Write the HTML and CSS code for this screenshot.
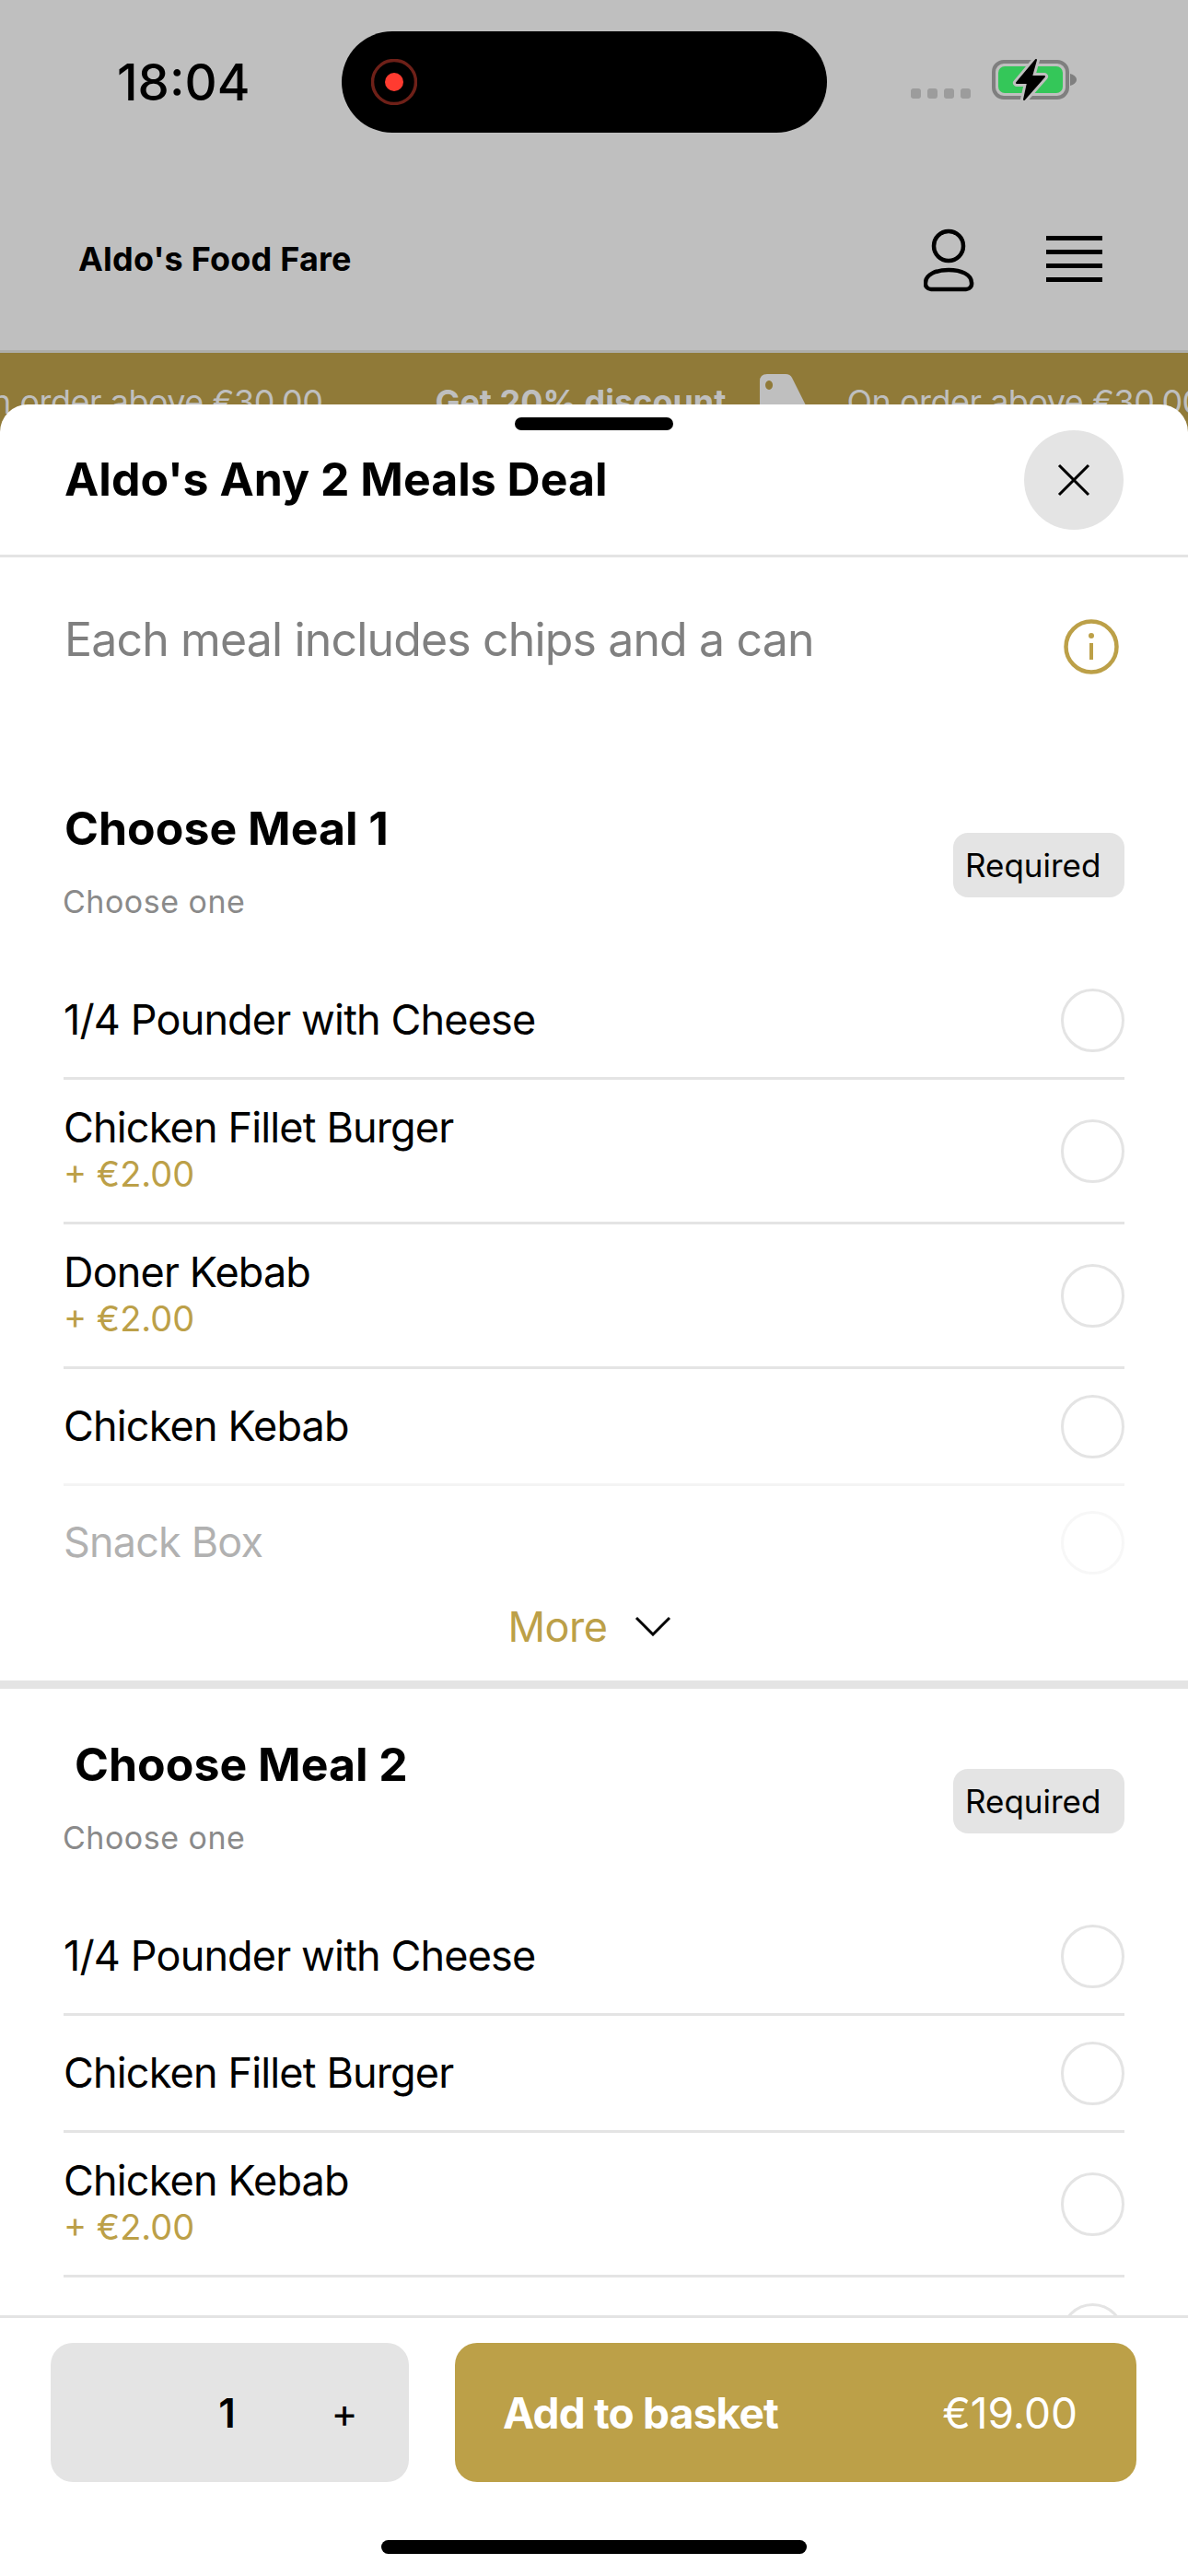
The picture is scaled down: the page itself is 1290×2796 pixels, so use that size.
FILE: index.html
```html
<!DOCTYPE html>
<html lang="en">
<head>
  <meta charset="UTF-8">
  <meta name="viewport" content="width=device-width, initial-scale=1.0">
  <title>Aldo's Food Fare</title>
  <link rel="stylesheet" href="styles.css">
</head>
<body>
  <div class="screen">
    <div class="backdrop">
      <div class="status-bar">
        <span class="status-time">18:04</span>
        <div class="island">
          <svg class="record-dot" width="50" height="50" viewBox="0 0 50 50">
            <circle cx="25" cy="25" r="23.5" fill="none" stroke="#6e2018" stroke-width="3.5"/>
            <circle cx="25" cy="25" r="10" fill="#ff3b30"/>
          </svg>
        </div>
        <svg class="status-icons" width="181" height="52" viewBox="0 0 181 52">
          <rect x="0" y="36" width="11" height="11" rx="3" fill="#9c9c9c"/>
          <rect x="18" y="36" width="11" height="11" rx="3" fill="#9c9c9c"/>
          <rect x="36" y="36" width="11" height="11" rx="3" fill="#9c9c9c"/>
          <rect x="54" y="36" width="11" height="11" rx="3" fill="#9c9c9c"/>
          <rect x="90" y="7" width="80" height="39" rx="11" fill="none" stroke="#7f7f7f" stroke-width="4"/>
          <rect x="95" y="12" width="70" height="29" rx="7" fill="#34c759"/>
          <path d="M173 20c4 1 7 3.500 7 6.500s-3 5.500-7 6.500z" fill="#7f7f7f"/>
          <path d="M136 5 115 30h12l-4 18 22-25h-14z" fill="#000" stroke="#bfbfbf" stroke-width="8" stroke-linejoin="round"/>
          <path d="M136 5 115 30h12l-4 18 22-25h-14z" fill="#000" stroke="#000" stroke-width="2" stroke-linejoin="round"/>
        </svg>
      </div>

      <header class="app-header">
        <span class="app-name">Aldo's Food Fare</span>
        <svg class="person-icon" width="55" height="70" viewBox="0 0 55 70">
          <circle cx="27" cy="20" r="16" fill="none" stroke="#000" stroke-width="4.500"/>
          <path d="M8 67h38a6 6 0 0 0 6-7c0-9-11-14-25-14S2 51 2 60a6 6 0 0 0 6 7z" fill="none" stroke="#000" stroke-width="4.500"/>
        </svg>
        <div class="menu-icon">
          <span></span><span></span><span></span><span></span>
        </div>
      </header>

      <div class="promo">
        <span class="promo-text promo-first">On order above €30.00</span>
        <strong class="promo-bold">Get 20% discount</strong>
        <svg class="tag-icon" width="60" height="60" viewBox="0 0 60 60">
          <path fill-rule="evenodd" d="M8 0h20q5 0 7 4l25 50v6H0V8q0-8 8-8zM10 7a4 5 0 1 0 .1 0z" fill="#bfbfbf"/>
        </svg>
        <span class="promo-text">On order above €30.00</span>
      </div>
    </div>

    <div class="sheet">
      <div class="sheet-handle"></div>
      <div class="sheet-header">
        <h1>Aldo's Any 2 Meals Deal</h1>
        <button class="close-button">
          <svg width="36" height="36" viewBox="0 0 36 36">
            <path d="M2 2l32 32M34 2 2 34" stroke="#000" stroke-width="3" fill="none"/>
          </svg>
        </button>
      </div>

      <div class="sheet-body">
        <div class="deal-info">
          <p>Each meal includes chips and a can</p>
          <svg class="info-icon" width="60" height="60" viewBox="0 0 60 60">
            <circle cx="30" cy="30" r="27.500" fill="none" stroke="#bca048" stroke-width="4.500"/>
            <circle cx="30" cy="18" r="3" fill="#bca048"/>
            <rect x="28" y="26" width="4" height="18" fill="#bca048"/>
          </svg>
        </div>

        <section class="meal meal-first">
          <div class="meal-head">
            <div>
              <h2>Choose Meal 1</h2>
              <p class="meal-sub">Choose one</p>
            </div>
            <span class="required">Required</span>
          </div>
          <div class="option">
            <div class="option-label">1/4 Pounder with Cheese</div>
            <span class="radio"></span>
          </div>
          <div class="option option-tall">
            <div class="option-label">Chicken Fillet Burger<div class="option-price">+ €2.00</div></div>
            <span class="radio"></span>
          </div>
          <div class="option option-tall">
            <div class="option-label">Doner Kebab<div class="option-price">+ €2.00</div></div>
            <span class="radio"></span>
          </div>
          <div class="option option-fading">
            <div class="option-label">Chicken Kebab</div>
            <span class="radio"></span>
          </div>
          <div class="option option-faded">
            <div class="option-label">Snack Box</div>
            <span class="radio"></span>
          </div>
          <div class="more">
            <span>More</span>
            <svg width="40" height="22" viewBox="0 0 40 22">
              <path d="M2 2l18 18L38 2" fill="none" stroke="#000" stroke-width="3"/>
            </svg>
          </div>
        </section>

        <section class="meal">
          <div class="meal-head">
            <div>
              <h2 class="title-indent">Choose Meal 2</h2>
              <p class="meal-sub">Choose one</p>
            </div>
            <span class="required">Required</span>
          </div>
          <div class="option">
            <div class="option-label">1/4 Pounder with Cheese</div>
            <span class="radio"></span>
          </div>
          <div class="option">
            <div class="option-label">Chicken Fillet Burger</div>
            <span class="radio"></span>
          </div>
          <div class="option option-tall">
            <div class="option-label">Chicken Kebab<div class="option-price">+ €2.00</div></div>
            <span class="radio"></span>
          </div>
          <div class="option">
            <div class="option-label">Snack Box</div>
            <span class="radio"></span>
          </div>
        </section>
      </div>

      <footer class="sheet-footer">
        <div class="footer-actions">
          <div class="quantity">
            <span class="quantity-value">1</span>
            <span class="quantity-plus">+</span>
          </div>
          <button class="add-button">
            <strong>Add to basket</strong>
            <span>€19.00</span>
          </button>
        </div>
        <div class="home-bar"></div>
      </footer>
    </div>
  </div>
</body>
</html>
```

FILE: styles.css
```css
* {
  box-sizing: border-box;
}
body {
  margin: 0;
  font-family: Inter, "Noto Sans", sans-serif;
  color: #000;
  background-color: #fff;
}
.screen {
  width: 1290px;
  height: 2796px;
  display: flex;
  flex-direction: column;
  overflow: hidden;
}

/* Dimmed page behind the sheet */
.backdrop {
  height: 470px;
  flex-shrink: 0;
  background-color: #bfbfbf;
  overflow: hidden;
}
.status-bar {
  display: flex;
  align-items: center;
  height: 144px;
  padding-top: 34px;
}
.status-time {
  width: 371px;
  padding-left: 127px;
  font-size: 54.500px;
  font-weight: 500;
}
.island {
  display: flex;
  align-items: center;
  width: 527px;
  height: 110px;
  padding-left: 32px;
  border-radius: 55px;
  background-color: #000;
}
.status-icons {
  margin-left: 91px;
  margin-bottom: 6px;
}
.app-header {
  display: flex;
  align-items: center;
  height: 239px;
  padding: 38px 93px 0 85px;
  border-bottom: 3px solid #adadaa;
}
.app-name {
  flex: 1;
  font-size: 36px;
  font-weight: 700;
  letter-spacing: 0.2px;
}
.person-icon {
  margin-right: 78px;
  margin-top: 2px;
}
.menu-icon {
  display: flex;
  flex-direction: column;
  gap: 10px;
  width: 61px;
}
.menu-icon span {
  height: 5px;
  background-color: #000;
}
.promo {
  display: flex;
  align-items: flex-start;
  height: 87px;
  padding-top: 23px;
  background-color: #907a38;
  color: #bfbfbf;
  font-size: 36px;
  line-height: 60px;
  white-space: nowrap;
}
.promo-text {
  letter-spacing: -0.5px;
}
.promo-first {
  margin-left: -36px;
  margin-right: 122px;
}
.tag-icon {
  flex-shrink: 0;
  margin: 0 34px 0 37px;
}

/* Bottom sheet */
.sheet {
  flex: 1;
  min-height: 0;
  display: flex;
  flex-direction: column;
  margin-top: -31px;
  position: relative;
  border-radius: 30px 30px 0 0;
  background-color: #fff;
}
.sheet-handle {
  width: 172px;
  height: 14px;
  margin: 14px auto 0;
  border-radius: 7px;
  background-color: #000;
}
.sheet-header {
  display: flex;
  align-items: center;
  justify-content: space-between;
  padding: 0 70px 27px;
  border-bottom: 3px solid #e4e4e4;
}
h1 {
  margin: 0 0 3px;
  font-size: 50px;
  font-weight: 700;
}
.close-button {
  display: flex;
  align-items: center;
  justify-content: center;
  width: 108px;
  height: 108px;
  padding: 0;
  border: none;
  border-radius: 50%;
  background-color: #e4e4e4;
}
.sheet-body {
  flex: 1;
  min-height: 0;
  overflow: hidden;
}
.deal-info {
  display: flex;
  justify-content: space-between;
  padding: 59px 75px 0 70px;
}
.deal-info p {
  margin: 0;
  font-size: 50px;
  line-height: 60px;
  letter-spacing: -0.85px;
  color: #808080;
}
.info-icon {
  margin-top: 8px;
}
.meal {
  padding: 52px 69px 0;
}
.meal-first {
  padding-top: 137px;
  padding-bottom: 29px;
  border-bottom: 9px solid #e4e4e4;
}
.meal-head {
  display: flex;
  justify-content: space-between;
  align-items: flex-start;
  height: 176px;
}
h2 {
  margin: 0 0 0 1px;
  font-size: 50px;
  line-height: 60px;
  font-weight: 700;
}
.title-indent {
  margin-left: 12px;
}
.meal-sub {
  margin: 30px 0 0 -1px;
  font-size: 34px;
  line-height: 40px;
  color: #8a8a8a;
  letter-spacing: 0.5px;
}
.required {
  width: 186px;
  height: 70px;
  margin-top: 35px;
  padding-left: 13px;
  border-radius: 16px;
  background-color: #e4e4e4;
  font-size: 35px;
  line-height: 70px;
}

/* Option rows */
.option {
  display: flex;
  align-items: center;
  justify-content: space-between;
  min-height: 127px;
  border-bottom: 3px solid #e4e4e4;
}
.option-tall {
  min-height: 157px;
}
.option-label {
  font-size: 45px;
  line-height: 50px;
  letter-spacing: -0.85px;
}
.option-price {
  font-size: 38px;
  letter-spacing: 0;
  color: #bca048;
}
.radio {
  width: 69px;
  height: 69px;
  border: 3px solid #e4e4e4;
  border-radius: 50%;
}
.option-fading {
  border-bottom-color: #f4f4f4;
}
.option-faded {
  min-height: 122px;
  border-bottom: none;
  opacity: 0.3;
}
.more {
  display: flex;
  align-items: center;
  justify-content: center;
  gap: 29px;
  height: 60px;
  padding-right: 10px;
  font-size: 45px;
  letter-spacing: -0.5px;
  color: #bca048;
}

.sheet-footer {
  flex-shrink: 0;
  height: 283px;
  padding: 27px 56px 0 55px;
  border-top: 3px solid #e4e4e4;
  background-color: #fff;
}
.footer-actions {
  display: flex;
  gap: 50px;
  height: 151px;
}
.quantity {
  display: grid;
  grid-template-columns: 1fr 1fr 1fr;
  align-items: center;
  justify-items: center;
  width: 389px;
  padding-right: 6px;
  border-radius: 24px;
  background-color: #e4e4e4;
  font-size: 44px;
}
.quantity-value {
  grid-column: 2;
  font-weight: 600;
}
.add-button {
  flex: 1;
  display: flex;
  align-items: center;
  justify-content: space-between;
  padding: 0 64px 0 52px;
  border: none;
  border-radius: 24px;
  background-color: #bca048;
  color: #fff;
  font-family: inherit;
  font-size: 46px;
}
.add-button strong {
  letter-spacing: -0.8px;
}
.home-bar {
  width: 462px;
  height: 15px;
  margin: 63px auto 0;
  border-radius: 8px;
  background-color: #000;
}
```
